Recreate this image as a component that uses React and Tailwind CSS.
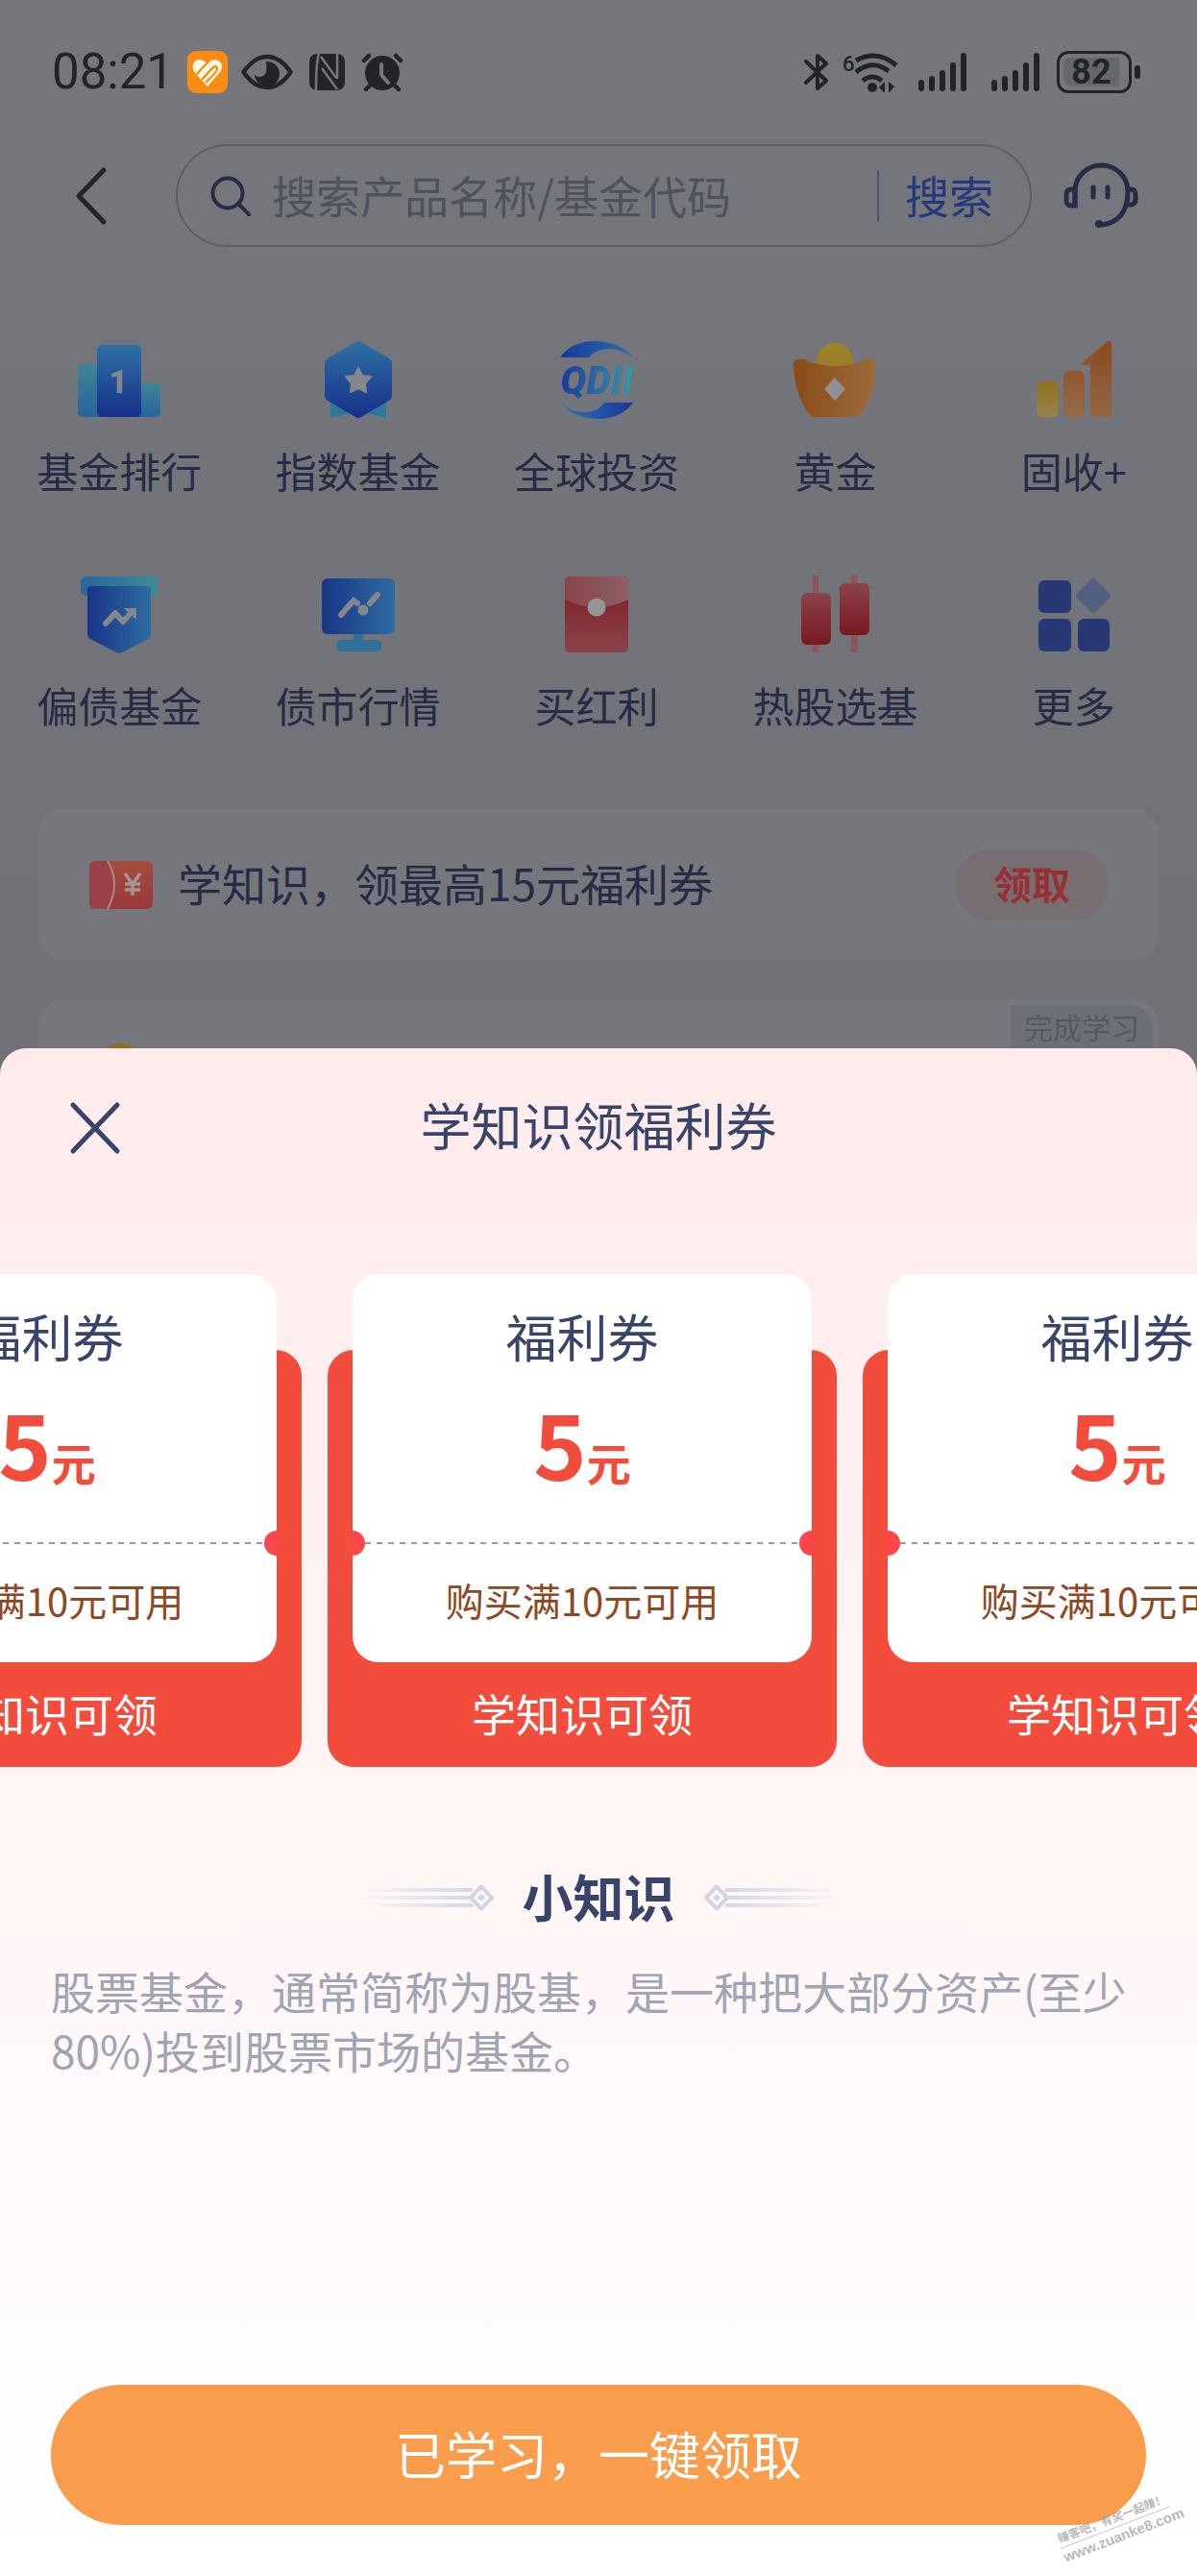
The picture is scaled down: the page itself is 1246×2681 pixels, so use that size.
import { useState } from 'react';

const entries = [
  { label: '基金排行', Icon: RankIcon },
  { label: '指数基金', Icon: IndexIcon },
  { label: '全球投资', Icon: QdiiIcon },
  { label: '黄金', Icon: GoldIcon },
  { label: '固收+', Icon: IncomeIcon },
  { label: '偏债基金', Icon: ShieldIcon },
  { label: '债市行情', Icon: MonitorIcon },
  { label: '买红利', Icon: PacketIcon },
  { label: '热股选基', Icon: CandleIcon },
  { label: '更多', Icon: MoreIcon },
];

const coupons = [
  { id: 1, amount: 5, rule: '购买满10元可用' },
  { id: 2, amount: 5, rule: '购买满10元可用' },
  { id: 3, amount: 5, rule: '购买满10元可用' },
];

function App() {
  const [keyword, setKeyword] = useState('');
  return (
    <div className="relative min-h-screen overflow-hidden bg-[#6f7076] font-['Noto_Sans_CJK_SC',sans-serif]">
      <div className="bg-linear-to-b from-[#76777c] to-[#707177]">
        <StatusBar />
        <header className="flex items-center pl-[75px] pr-[60px]">
          <button type="button" aria-label="返回" className="w-10">
            <svg viewBox="0 0 40 68" className="h-[68px] w-10" fill="none" stroke="#222428" strokeWidth="5" strokeLinecap="round" strokeLinejoin="round">
              <path d="M33 7 7 34l26 27" />
            </svg>
          </button>
          <div className="ml-[68px] mr-8 flex h-[107px] flex-1 items-center rounded-full border-2 border-[#5e5f65] pl-[34px] pr-[38px]">
            <svg viewBox="0 0 44 44" className="h-11 w-11 shrink-0" fill="none" stroke="#252c44" strokeWidth="4" strokeLinecap="round">
              <circle cx="18" cy="19" r="15.5" />
              <path d="m30 31 10 10" />
            </svg>
            <input
              type="text"
              aria-label="搜索产品名称或基金代码"
              placeholder="搜索产品名称/基金代码"
              value={keyword}
              onChange={(e) => setKeyword(e.target.value)}
              className="ml-5 h-16 min-w-0 flex-1 bg-transparent pb-1 text-[46px] leading-[60px] text-[#252c44] outline-none placeholder:text-[#4e525f]"
            />
            <span className="mr-[27px] h-[54px] w-0.5 bg-[#4a5479]" />
            <button type="button" className="pb-1 text-[46px] leading-[60px] text-[#26387c]">搜索</button>
          </div>
          <button type="button" aria-label="客服" className="w-20">
            <svg viewBox="0 0 80 70" className="h-[70px] w-20" fill="none" stroke="#252c44" strokeWidth="5" strokeLinecap="round">
              <path d="M13 44V30a27.500 27 0 0 1 55 0c0 20-9 34-29 35" />
              <path d="M13 28H9c-3 0-5 2-5 6v6c0 3 2 5 5 5h4zM68 28h3c3 0 5 2 5 6v4c0 4-2 6-5 6h-4" />
              <path d="M32 26v10M47 26v10" />
              <circle cx="38" cy="64" r="1.500" />
            </svg>
          </button>
        </header>

        <nav className="mt-[94px] grid grid-cols-5 gap-y-[76px] pr-1">
          {entries.map(({ label, Icon }) => (
            <a key={label} href="#" className="flex flex-col items-center">
              <Icon />
              <span className="mt-5 text-[43px] leading-[60px] text-[#252c44]">{label}</span>
            </a>
          ))}
        </nav>

        <section className="mt-[78px] space-y-10 px-10">
          <div className="flex h-[159px] items-center rounded-[27px] bg-[#76777c] px-[52px]">
            <CouponIcon />
            <p className="ml-[25px] flex-1 pb-1.5 text-[46px] leading-[60px] text-[#252c44]">学知识，领最高15元福利券</p>
            <button type="button" className="h-[74px] w-40 rounded-full bg-[#776e71] pb-1 text-[40px] leading-[60px] font-bold text-[#973032]">
              领取
            </button>
          </div>
          <div className="flex h-[159px] items-start justify-between rounded-[27px] bg-[#76777c] p-1.5 pl-[60px]">
            <svg viewBox="0 0 50 50" className="mt-10 h-[50px] w-[50px]">
              <circle cx="25" cy="25" r="25" fill="#8e6c24" />
            </svg>
            <span className="rounded-tr-[24px] bg-[#6c6f77] px-3.5 pb-5 text-[30px] leading-[44px] text-[#545867]">完成学习</span>
          </div>
        </section>
      </div>

      <CouponSheet />
      <Watermark />
    </div>
  );
}

function StatusBar() {
  return (
    <div className="flex h-[150px] items-center justify-between pl-[54px] pr-[59px] font-[Roboto,sans-serif] text-[#222428]">
      <div className="flex items-center">
        <span className="w-[141px] text-[51px] leading-[60px]">08:21</span>
        <svg viewBox="0 0 42 44" className="h-11 w-[42px]">
          <rect width="42" height="44" rx="9" fill="#fb8c12" />
          <path d="M7 21c-3-5-1-11 5-12 4 0 6 2 9 4 3-3 7-5 11-3 5 3 5 8 2 12L21 37 8 23z" fill="#fff8e8" />
          <path d="m9 25 14-15M15 30l12-13q3-2 4 1t-12 15" fill="none" stroke="#fb8c12" strokeWidth="2.4" />
        </svg>
        <svg viewBox="0 0 54 38" className="ml-3.5 h-[38px] w-[54px]">
          <path d="M2.500 19C10 8 18 3 27 3s17 5 24.500 16C44 30 36 35 27 35S10 30 2.500 19Z" fill="none" stroke="#222428" strokeWidth="4.500" />
          <path d="M26 8a13 13 0 1 1-12 14c3 3 10 3 12-3 1-4 0-8 0-11Z" fill="#222428" />
        </svg>
        <svg viewBox="0 0 38 38" className="ml-[17px] h-[38px] w-[38px]">
          <rect width="37" height="38" rx="8" fill="#222428" />
          <path d="M10 0Q7 8 7 38M12 3l16 22M13 15l16 22M29 0v26" fill="none" stroke="#75767b" strokeWidth="2.500" />
        </svg>
        <svg viewBox="0 0 44 40" className="ml-4 h-10 w-11" stroke="#222428" strokeLinecap="round">
          <circle cx="22" cy="21" r="18" fill="#222428" stroke="none" />
          <path d="m3 8 5-5M41 8l-5-5M9 34l-4 4M35 34l4 4" fill="none" strokeWidth="4.500" />
          <path d="M21 12v11l7 8" fill="none" stroke="#75767b" strokeWidth="4" />
        </svg>
      </div>
      <div className="flex items-center">
        <svg viewBox="0 0 26 40" className="h-10 w-[26px]" fill="none" stroke="#222428" strokeWidth="4" strokeLinecap="round" strokeLinejoin="round">
          <path d="M2 9 23 29l-9 8V3l9 8L2 31" />
        </svg>
        <svg viewBox="0 0 58 42" className="ml-3.5 h-[42px] w-[58px]" fill="none" stroke="#222428" strokeWidth="5">
          <text x="0" y="20" fontSize="22" fontWeight="500" fill="#222428" stroke="none">6</text>
          <path d="M14 9q22-12 42 5M14 21q17-14 34-1M21 30q10-8 20 0" strokeLinecap="butt" />
          <circle cx="31" cy="37" r="5" fill="#222428" stroke="none" />
          <path d="m38 37 6-6v12zM54 36l-6-5v12z" fill="#222428" stroke="none" />
        </svg>
        <SignalIcon className="ml-5 h-[42px] w-[52px]" />
        <SignalIcon className="ml-6 h-[42px] w-[52px]" />
        <div className="ml-[17px] flex h-11 w-[78px] items-center rounded-xl border-3 border-[#222428] p-1">
          <span className="flex h-full flex-1 items-center justify-center rounded-l-lg bg-[#66676c] text-[36px] leading-[40px] font-bold">82</span>
          <span className="w-1.5" />
        </div>
        <span className="ml-[3px] h-3.5 w-1.5 rounded-sm bg-[#222428]" />
      </div>
    </div>
  );
}

function SignalIcon({ className }) {
  return (
    <svg viewBox="0 0 52 42" className={className} stroke="#222428" strokeWidth="6" strokeLinecap="round">
      <path d="M4 32v6M15 28v10M26 22v16M37 14v24M48 4v34" />
    </svg>
  );
}

function CouponSheet() {
  return (
    <section role="dialog" aria-labelledby="sheet-title" className="absolute inset-x-0 bottom-0 overflow-hidden rounded-t-[27px] bg-linear-to-b from-[#ffebeb] to-white">
      <header className="grid h-[164px] grid-cols-[1fr_auto_1fr] items-center">
        <button type="button" aria-label="关闭" className="ml-[70px] w-[60px]">
          <svg viewBox="0 0 60 60" className="h-[60px] w-[60px]" stroke="#39446b" strokeWidth="5" strokeLinecap="round">
            <path d="m6 7 46 48M52 7 6 55" />
          </svg>
        </button>
        <h2 id="sheet-title" className="pb-1.5 text-[53px] leading-[60px] text-[#39446b]">学知识领福利券</h2>
      </header>

      <ul className="mt-[71px] -ml-54 flex gap-[27px]">
        {coupons.map((coupon) => (
          <Coupon key={coupon.id} {...coupon} />
        ))}
      </ul>

      <div className="mt-[104px] flex items-center justify-center gap-[30px]">
        <Ornament className="mt-1 h-7 w-[155px]" />
        <h3 className="text-[53px] leading-[60px] font-bold text-[#39446b]">小知识</h3>
        <Ornament className="mt-1 h-7 w-[155px] -scale-x-100" />
      </div>
      <p className="mx-[53px] mt-[37px] text-[46px] leading-[62px] text-[#a0a5b4]">
        股票基金，通常简称为股基，是一种把大部分资产(至少80%)投到股票市场的基金。
      </p>
      <div className="px-[53px] pt-[318px] pb-[53px]">
        <button type="button" className="h-[146px] w-full rounded-full bg-[#f99d4d] pb-1 text-[53px] leading-[60px] text-white">
          已学习，一键领取
        </button>
      </div>
    </section>
  );
}

function Coupon({ amount, rule }) {
  return (
    <li className="relative w-[530px] shrink-0 px-[26px] text-center">
      <div className="absolute inset-x-0 top-[79px] bottom-0 rounded-[27px] bg-[#f24c3d]" />
      <div className="relative h-[404px] overflow-hidden rounded-[27px] bg-white pt-[34px]">
        <h4 className="text-[53px] leading-[60px] text-[#39446b]">福利券</h4>
        <p className="mt-8 flex h-24 items-baseline justify-center font-bold text-[#f24c3d]">
          <span className="text-[94px] leading-[96px]">{amount}</span>
          <span className="text-[46px] leading-[60px]">元</span>
        </p>
        <div className="-mx-[13px] mt-[45px] flex items-center">
          <span className="h-[26px] w-[26px] rounded-full bg-[#fd464c]" />
          <span className="h-0.5 flex-1 bg-[repeating-linear-gradient(90deg,#b98d96_0_6px,transparent_6px_12px)]" />
          <span className="h-[26px] w-[26px] rounded-full bg-[#fd464c]" />
        </div>
        <p className="mt-4 text-[40px] leading-[60px] text-[#8f4724]">{rule}</p>
      </div>
      <p className="relative flex h-[109px] items-center justify-center pb-1.5 text-[46px] leading-[60px] text-white">学知识可领</p>
    </li>
  );
}

function Ornament({ className }) {
  return (
    <svg viewBox="0 0 155 28" className={className} fill="none">
      <defs>
        <linearGradient id="fade" gradientUnits="userSpaceOnUse" x1="5" y1="0" x2="130" y2="0">
          <stop offset="0" stopColor="#d9dce6" stopOpacity="0" />
          <stop offset="1" stopColor="#d3d8e4" />
        </linearGradient>
      </defs>
      <path d="M25 6h108M5 14h124M35 22h98" stroke="url(#fade)" strokeWidth="4" />
      <path d="m142 2.500 11 11.500-11 11.500L131 14z" stroke="#d3d6e1" strokeWidth="4" strokeLinejoin="round" />
      <path d="m142 10 4 4-4 4-4-4z" fill="#d3d6e1" />
    </svg>
  );
}

function Watermark() {
  return (
    <div className="pointer-events-none absolute right-[24px] bottom-[30px] w-[122px] -rotate-[21deg] text-center font-bold text-[#9a9a9a]/70">
      <p className="border-b border-[#9a9a9a]/60 text-[12px] leading-[20px] whitespace-nowrap">赚客吧，有奖一起赚！</p>
      <p className="font-['Liberation_Sans',sans-serif] text-[15px] leading-[20px]">www.zuanke8.com</p>
    </div>
  );
}

function IconBox({ children }) {
  return <svg viewBox="0 0 88 88" className="h-22 w-22">{children}</svg>;
}

function Gradient({ id, from, to, horizontal = false }) {
  return (
    <linearGradient id={id} x1="0" y1="0" x2={horizontal ? 1 : 0} y2={horizontal ? 0 : 1}>
      <stop offset="0" stopColor={from} />
      <stop offset="1" stopColor={to} />
    </linearGradient>
  );
}

function RankIcon() {
  return (
    <IconBox>
      <Gradient id="rank-side" from="#3b8796" to="#2a629c" />
      <Gradient id="rank-main" from="#2f70a3" to="#16308b" />
      <rect x="1" y="28" width="30" height="55" rx="5" fill="url(#rank-side)" />
      <rect x="57" y="48" width="30" height="35" rx="5" fill="url(#rank-side)" />
      <rect x="21" y="8" width="46" height="75" rx="5" fill="url(#rank-main)" />
      <text x="43" y="58" textAnchor="middle" fontFamily="Roboto, sans-serif" fontSize="33" fontWeight="900" fill="#85878d">1</text>
    </IconBox>
  );
}

function IndexIcon() {
  return (
    <IconBox>
      <Gradient id="index-main" from="#2f70a3" to="#16308b" />
      <path d="M15 60h58v24l-17-4-12-8-12 8-17 4z" fill="#2f7799" />
      <path d="M41 5q3-2 6 0l29 17q3 2 3 5v34q0 3-3 5L47 83q-3 2-6 0L12 66q-3-2-3-5V27q0-3 3-5z" fill="url(#index-main)" />
      <path d="m44 32 4 8 9 1-6 7 1 9-8-4-8 4 1-9-6-7 9-1z" fill="#85878d" stroke="#85878d" strokeWidth="2" strokeLinejoin="round" />
    </IconBox>
  );
}

function QdiiIcon() {
  return (
    <IconBox>
      <Gradient id="qdii-top" from="#17399a" to="#2d6eb0" horizontal />
      <Gradient id="qdii-bottom" from="#3274ad" to="#17389a" horizontal />
      <linearGradient id="qdii-text" gradientUnits="userSpaceOnUse" x1="5" y1="0" x2="83" y2="0">
        <stop offset="0" stopColor="#17389a" />
        <stop offset="1" stopColor="#3e98a5" />
      </linearGradient>
      <path d="M6 21Q18 4 43 4q26 1 39 17-22-14-38-6-5 2-8 6z" fill="url(#qdii-top)" />
      <path d="M8 69q14 12 31 8 8-2 13-9h30q-12 17-37 17Q18 84 8 69z" fill="url(#qdii-bottom)" />
      <text x="44" y="59" textAnchor="middle" fontFamily="Roboto, sans-serif" fontSize="40" fontWeight="900" fontStyle="italic" fill="url(#qdii-text)">QDII</text>
    </IconBox>
  );
}

function GoldIcon() {
  return (
    <IconBox>
      <Gradient id="gold-ball" from="#a08728" to="#99732b" />
      <Gradient id="gold-body" from="#8a4a18" to="#9c6c3c" horizontal />
      <circle cx="44" cy="25" r="19" fill="url(#gold-ball)" />
      <path d="M1 32c-2-9 8-13 15-7q28 10 56 0c7-6 17-2 15 7-1 17-6 33-14 45q-4 6-10 6H25q-6 0-10-6C7 65 2 49 1 32Z" fill="url(#gold-body)" />
      <path d="m44 42 11 12-11 12-11-12z" fill="#909196" />
    </IconBox>
  );
}

function IncomeIcon() {
  return (
    <IconBox>
      <Gradient id="income-a" from="#92701e" to="#94854d" />
      <Gradient id="income-b" from="#94562b" to="#946b4b" />
      <Gradient id="income-c" from="#8c4a1c" to="#936646" />
      <rect x="5" y="46" width="23" height="37" rx="6" fill="url(#income-a)" />
      <rect x="33" y="35" width="22" height="48" rx="6" fill="url(#income-b)" />
      <path d="M61 29h-7q-3-1-1-3L78 5q5-3 5 3v69q0 6-6 6H67q-6 0-6-6z" fill="url(#income-c)" />
    </IconBox>
  );
}

function ShieldIcon() {
  return (
    <IconBox>
      <Gradient id="shield-bar" from="#2a659b" to="#398c97" horizontal />
      <Gradient id="shield-main" from="#183488" to="#2d6ca0" horizontal />
      <rect x="4" y="5" width="80" height="20" rx="6" fill="url(#shield-bar)" />
      <path d="M15 15h58q4 0 4 4v45q0 4-3 6L47 84q-3 2-6 0L14 70q-3-2-3-6V19q0-4 4-4z" fill="url(#shield-main)" />
      <path d="m30 54 10-11 8 9 9-10" fill="none" stroke="#85878d" strokeWidth="6" strokeLinecap="round" strokeLinejoin="round" />
      <path d="M49 38h13v12z" fill="#85878d" />
    </IconBox>
  );
}

function MonitorIcon() {
  return (
    <IconBox>
      <Gradient id="monitor-main" from="#183488" to="#2d6ca0" horizontal />
      <path d="M39 62h10v9h13q6 0 6 6t-6 6H27q-6 0-6-6t6-6h12z" fill="#2f7099" />
      <rect x="6" y="7" width="76" height="58" rx="6" fill="url(#monitor-main)" />
      <path d="m26 45 13-15 4 3M56 33l8-9" fill="none" stroke="#85878d" strokeWidth="6" strokeLinecap="round" />
      <circle cx="49" cy="40" r="5.500" fill="#85878d" />
    </IconBox>
  );
}

function PacketIcon() {
  return (
    <IconBox>
      <Gradient id="packet-body" from="#7d1b22" to="#8a434a" />
      <Gradient id="packet-flap" from="#8a444a" to="#8d6065" horizontal />
      <rect x="11" y="5" width="66" height="79" rx="5" fill="url(#packet-body)" />
      <path d="M16 5h56q5 0 5 5v19q-33 16-66 0V10q0-5 5-5z" fill="url(#packet-flap)" />
      <circle cx="44" cy="37" r="9.500" fill="#94959a" />
    </IconBox>
  );
}

function CandleIcon() {
  return (
    <IconBox>
      <Gradient id="candle" from="#8b434a" to="#781820" />
      <path d="M21 4h6v80h-6zM61 4h7v80h-7z" fill="#8c555b" />
      <rect x="9" y="22" width="31" height="54" rx="6" fill="url(#candle)" />
      <rect x="49" y="12" width="31" height="54" rx="6" fill="url(#candle)" />
    </IconBox>
  );
}

function MoreIcon() {
  return (
    <IconBox>
      <g fill="#273874">
        <rect x="7" y="9" width="34" height="34" rx="6" />
        <rect x="7" y="49" width="34" height="34" rx="6" />
        <rect x="48" y="49" width="33" height="34" rx="6" />
      </g>
      <path d="m64 10 15 15-15 15-15-15z" fill="#535e83" stroke="#535e83" strokeWidth="6" strokeLinejoin="round" />
    </IconBox>
  );
}

function CouponIcon() {
  return (
    <svg viewBox="0 0 68 52" className="h-[52px] w-[68px]">
      <Gradient id="coupon" from="#a64c3d" to="#97383d" />
      <rect x="1" y="1" width="66" height="50" rx="6" fill="url(#coupon)" />
      <path d="M7 1h12q16 24 0 50H7q-6 0-6-6V7q0-6 6-6z" fill="#9b4049" />
      <path d="M20 1q14 24 0 50" fill="none" stroke="#a68a87" strokeWidth="2" />
      <path d="m38 14 8 11 8-11M46 25v12M38 25h16M38 31h16" fill="none" stroke="#a49796" strokeWidth="3.500" />
    </svg>
  );
}

export default App;
